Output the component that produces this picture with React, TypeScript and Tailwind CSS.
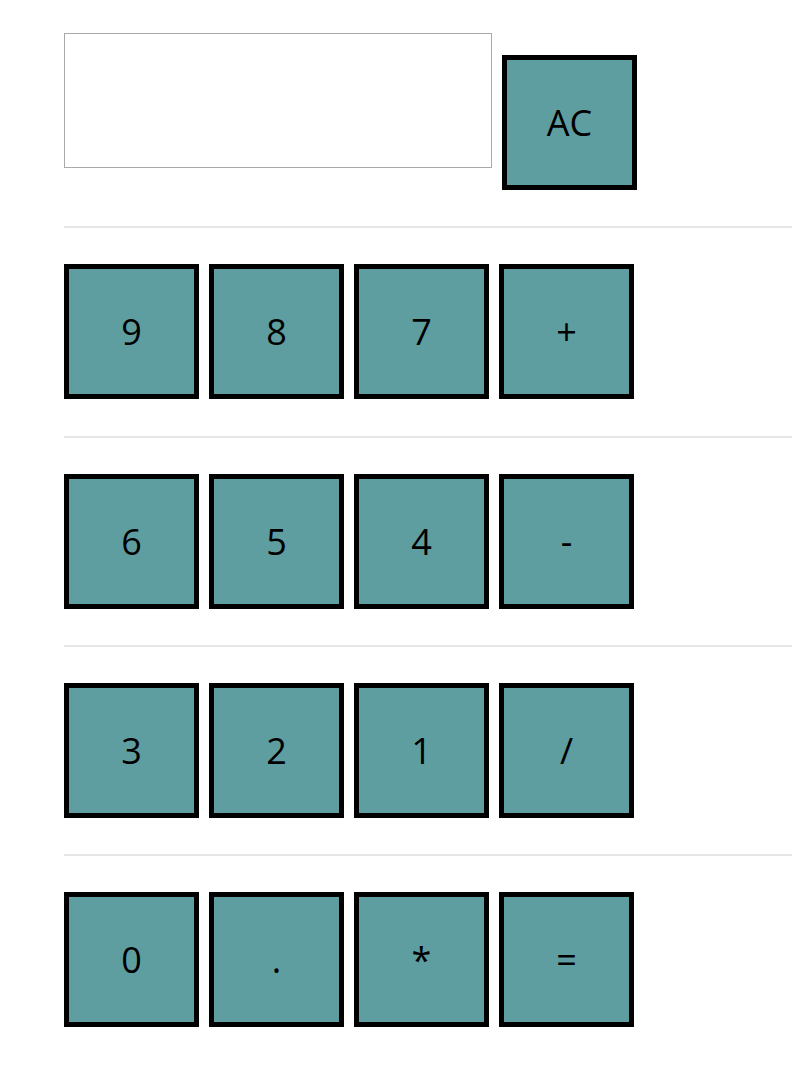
import React from "react";

const rows = [
  ["9", "8", "7", "+"],
  ["6", "5", "4", "-"],
  ["3", "2", "1", "/"],
  ["0", ".", "*", "="],
];

const hrGaps = ["mt-[36px]", "mt-[37px]", "mt-[36px]", "mt-[36px]"];

const Key = ({ label }: { label: string }) => (
  <button className="flex h-[135px] w-[135px] shrink-0 items-center justify-center border-[5px] border-black bg-[#5F9EA0] text-[36px] leading-none text-black">
    {label}
  </button>
);

export default function App() {
  return (
    <div
      className="min-h-screen bg-white pl-[64px]"
      style={{ fontFamily: '"Open Sans", "Noto Sans", sans-serif' }}
    >
      {/* Pantalla + AC */}
      <div className="flex items-start gap-[10px]">
        <div className="mt-[33px] h-[135px] w-[428px] border border-[#aaaaaa] bg-white"></div>
        <div className="mt-[55px]">
          <Key label="AC" />
        </div>
      </div>

      {rows.map((row, i) => (
        <div key={i}>
          <div className={`${hrGaps[i]} h-[2px] bg-[#e6e6e6]`}></div>
          <div className="mt-[36px] flex gap-[10px]">
            {row.map((k) => (
              <Key key={k} label={k} />
            ))}
          </div>
        </div>
      ))}
    </div>
  );
}
